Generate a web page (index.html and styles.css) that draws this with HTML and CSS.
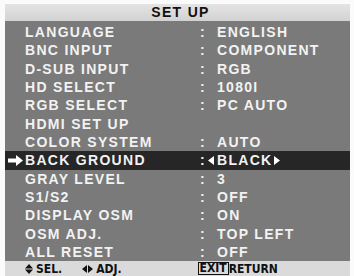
FILE: index.html
```html
<!DOCTYPE html>
<html lang="en">
  <head>
    <meta charset="UTF-8" />
    <meta name="viewport" content="width=device-width, initial-scale=1.0" />
    <title>Set Up</title>
    <link rel="stylesheet" href="styles.css">
  </head>
  <body>
    <div class="screen">
      <div class="title">SET UP</div>

      <div class="panel">
        <div class="row"><span></span><span class="label">LANGUAGE</span><span class="colon">:</span><span class="value">ENGLISH</span></div>
        <div class="row"><span></span><span class="label">BNC INPUT</span><span class="colon">:</span><span class="value">COMPONENT</span></div>
        <div class="row"><span></span><span class="label">D-SUB INPUT</span><span class="colon">:</span><span class="value">RGB</span></div>
        <div class="row"><span></span><span class="label">HD SELECT</span><span class="colon">:</span><span class="value">1080I</span></div>
        <div class="row"><span></span><span class="label">RGB SELECT</span><span class="colon">:</span><span class="value">PC AUTO</span></div>
        <div class="row"><span></span><span class="label">HDMI SET UP</span><span></span><span></span></div>
        <div class="row"><span></span><span class="label">COLOR SYSTEM</span><span class="colon">:</span><span class="value">AUTO</span></div>
        <div class="row active">
          <span class="marker">
            <svg width="15" height="11" viewBox="0 0 15 11"><path d="M0 3.5 H8 V0 L15 5.5 L8 11 V7.5 H0 Z" fill="#fff"/></svg>
          </span>
          <span class="label">BACK GROUND</span>
          <span class="colon">:<svg class="tri" width="6" height="9" viewBox="0 0 6 9"><path d="M6 0 V9 L0 4.5 Z" fill="#fff"/></svg></span>
          <span class="value">BLACK<svg class="tri" width="6" height="9" viewBox="0 0 6 9"><path d="M0 0 V9 L6 4.5 Z" fill="#fff"/></svg></span>
        </div>
        <div class="row"><span></span><span class="label">GRAY LEVEL</span><span class="colon">:</span><span class="value">3</span></div>
        <div class="row"><span></span><span class="label">S1/S2</span><span class="colon">:</span><span class="value">OFF</span></div>
        <div class="row"><span></span><span class="label">DISPLAY OSM</span><span class="colon">:</span><span class="value">ON</span></div>
        <div class="row"><span></span><span class="label">OSM ADJ.</span><span class="colon">:</span><span class="value">TOP LEFT</span></div>
        <div class="row"><span></span><span class="label">ALL RESET</span><span class="colon">:</span><span class="value">OFF</span></div>
      </div>

      <div class="footer">
        <span class="hint">
          <svg width="8" height="10" viewBox="0 0 8 10"><path d="M4 0 L8 4.4 H0 Z M0 5.6 H8 L4 10 Z" fill="#111"/></svg>
          SEL.
        </span>
        <span class="hint adj">
          <svg width="11" height="8" viewBox="0 0 11 8"><path d="M0 4 L5 0 V8 Z M6 0 L11 4 L6 8 Z" fill="#111"/></svg>
          ADJ.
        </span>
        <span class="hint exit"><span class="key">EXIT</span>RETURN</span>
      </div>
    </div>
  </body>
</html>
```

FILE: styles.css
```css
* {
  margin: 0;
  padding: 0;
  box-sizing: border-box;
}

body {
  background: #fbfbfb;
  font-family: "Liberation Sans", Arial, sans-serif;
  width: 354px;
  height: 276px;
  overflow: hidden;
}

.screen {
  margin: 4px 4px 0 5px;
}

.title {
  height: 17px;
  line-height: 17px;
  background: linear-gradient(#e4e4e4, #d2d2d2);
  color: #111;
  text-align: center;
  font-weight: bold;
  font-size: 14px;
  letter-spacing: 1.3px;
  padding-left: 6px;
}

.panel {
  background: #7a7a7a;
  padding-top: 2px;
}

.row {
  display: grid;
  grid-template-columns: 20px 175px 17px 1fr;
  height: 18.33px;
  line-height: 18.33px;
  color: #f2f2f2;
  font-weight: bold;
  font-size: 14px;
  letter-spacing: 1.3px;
  white-space: nowrap;
}

.row.active {
  background: #262626;
}

.marker {
  display: flex;
  align-items: center;
  padding-left: 3px;
}

.colon {
  display: flex;
  align-items: center;
  gap: 1px;
}

.value {
  display: flex;
  align-items: center;
}

.tri {
  margin-left: 1px;
}

.footer {
  height: 15px;
  background: #dadada;
  display: flex;
  align-items: center;
  padding-left: 20px;
  font-family: "Liberation Sans Narrow", "DejaVu Sans Condensed", sans-serif;
  font-weight: bold;
  font-size: 12px;
  color: #111;
}

.hint {
  display: flex;
  align-items: center;
  gap: 3px;
}

.adj {
  margin-left: 20px;
}

.exit {
  margin-left: 76px;
  gap: 0;
}

.key {
  border: 1px solid #111;
  line-height: 11px;
  padding: 0 1px;
}
```
